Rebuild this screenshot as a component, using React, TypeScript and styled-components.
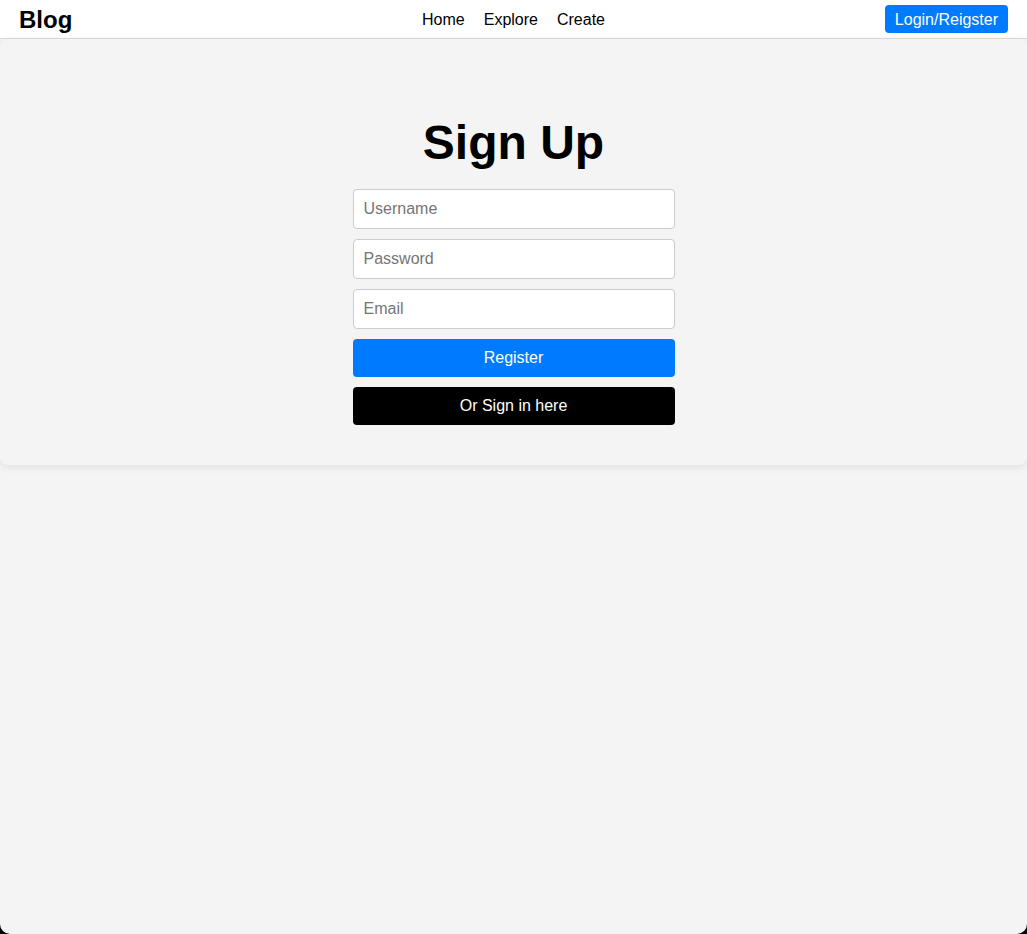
import React from "react";
import styled, { createGlobalStyle } from "styled-components";

const Global = createGlobalStyle`
  html { background: #000; height: 100%; }
  body {
    margin: 0;
    min-height: 100vh;
    background: #f4f4f4;
    border-radius: 0 0 10px 10px;
    font-family: "Liberation Sans", Arial, sans-serif;
    color: #000;
    overflow: hidden;
  }
  * { box-sizing: border-box; }
`;

const Nav = styled.nav`
  display: grid;
  grid-template-columns: 1fr auto 1fr;
  align-items: center;
  height: 39px;
  padding: 0 19px;
  background: #fff;
  border-bottom: 1px solid #dcdcdc;
`;

const Brand = styled.div`
  font-size: 24px;
  font-weight: 700;
  justify-self: start;
  padding-top: 1px;
`;

const Links = styled.div`
  display: flex;
  gap: 19px;
  padding-top: 2px;
`;

const NavLink = styled.a`
  font-size: 16px;
  color: #000;
  text-decoration: none;
`;

const LoginButton = styled.button`
  justify-self: end;
  height: 28px;
  padding: 1px 10px 0;
  border: none;
  border-radius: 4px;
  background: #007bff;
  color: #fff;
  font-family: inherit;
  font-size: 16px;
`;

const Card = styled.main`
  display: flex;
  flex-direction: column;
  align-items: center;
  padding: 40px 0 40px;
  background: #f4f4f4;
  border-radius: 8px;
  box-shadow: 0 2px 10px rgba(0, 0, 0, 0.09);
`;

const Title = styled.h1`
  margin: 36px 0 19px;
  font-size: 48px;
  font-weight: 700;
  line-height: 55px;
`;

const Form = styled.form`
  display: flex;
  flex-direction: column;
  gap: 10px;
  width: 322px;
`;

const Input = styled.input`
  height: 40px;
  padding: 0 10px;
  border: 1px solid #ccc;
  border-radius: 4px;
  background: #fff;
  font-family: inherit;
  font-size: 16px;
  &::placeholder { color: #757575; }
`;

const Action = styled.button<{ $dark?: boolean }>`
  height: 38px;
  border: none;
  border-radius: 4px;
  background: ${(p) => (p.$dark ? "#000" : "#007bff")};
  color: #fff;
  font-family: inherit;
  font-size: 16px;
`;

export default function App() {
  return (
    <>
      <Global />
      <Nav>
        <Brand>Blog</Brand>
        <Links>
          <NavLink href="#">Home</NavLink>
          <NavLink href="#">Explore</NavLink>
          <NavLink href="#">Create</NavLink>
        </Links>
        <LoginButton>Login/Reigster</LoginButton>
      </Nav>
      <Card>
        <Title>Sign Up</Title>
        <Form onSubmit={(e) => e.preventDefault()}>
          <Input placeholder="Username" />
          <Input placeholder="Password" type="password" />
          <Input placeholder="Email" type="email" />
          <Action type="submit">Register</Action>
          <Action type="button" $dark>Or Sign in here</Action>
        </Form>
      </Card>
    </>
  );
}
